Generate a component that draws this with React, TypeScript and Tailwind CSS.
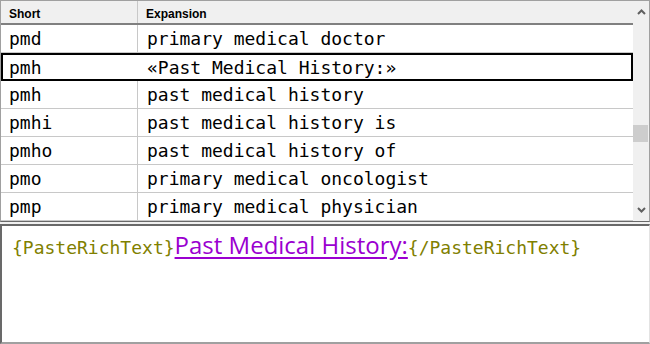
const rows: [string, string][] = [
  ['pmd', 'primary medical doctor'],
  ['pmh', '«Past Medical History:»'],
  ['pmh', 'past medical history'],
  ['pmhi', 'past medical history is'],
  ['pmho', 'past medical history of'],
  ['pmo', 'primary medical oncologist'],
  ['pmp', 'primary medical physician'],
];

const mono = { fontFamily: '"DejaVu Sans Mono", "Liberation Mono", monospace' };

function Chevron({ up }: { up?: boolean }) {
  return (
    <svg width="9" height="6" viewBox="0 0 9 6" className="block">
      <path
        d={up ? 'M1 5 L4.5 1.5 L8 5' : 'M1 1 L4.5 4.5 L8 1'}
        fill="none"
        stroke="#606060"
        strokeWidth="2"
      />
    </svg>
  );
}

export default function App() {
  return (
    <div className="w-[650px] h-[344px] bg-[#f0f0f0] flex flex-col overflow-hidden">
      <div className="h-[222px] flex bg-white border border-[#a0a0a0] border-b-[#696969]">
        <div className="flex-1 flex flex-col">
          <div
            className="h-[24px] flex bg-[#f0f0f0] border-b-2 border-[#808080] text-[12px] font-bold text-black"
            style={{ fontFamily: '"Liberation Sans", Arial, sans-serif' }}
          >
            <div className="w-[137px] pl-[8px] pt-[4px] border-r border-[#c8c8c8]">Short</div>
            <div className="flex-1 pl-[8px] pt-[4px]">Expansion</div>
          </div>
          {rows.map(([s, e], i) => {
            const sel = i === 1;
            return (
              <div
                key={i}
                className={
                  sel
                    ? 'h-[28px] flex items-center border-2 border-black text-[18px] font-medium text-black'
                    : 'h-[28px] flex items-center border-b border-[#c8c8c8] text-[18px] font-medium text-black'
                }
                style={mono}
              >
                <div
                  className={
                    sel
                      ? 'w-[135px] h-full flex items-center pl-[6px]'
                      : 'w-[137px] h-full flex items-center pl-[8px] border-r border-[#c8c8c8]'
                  }
                >
                  {s}
                </div>
                <div className="flex-1 pl-[9px] whitespace-pre">{e}</div>
              </div>
            );
          })}
        </div>
        <div className="w-[16px] bg-[#f0f0f0] flex flex-col items-center justify-between py-[8px] relative">
          <Chevron up />
          <div className="absolute left-0 right-[1px] top-[124px] h-[17px] bg-[#cdcdcd]" />
          <Chevron />
        </div>
      </div>
      <div className="mt-[2px] flex-1 bg-white border-t-2 border-l-2 border-[#696969] border-r border-r-[#e3e3e3] border-b-2 border-b-[#a0a0a0] px-[10px] pt-[1px]">
        <div className="flex items-baseline whitespace-pre">
          <span className="text-[18px] text-[#808000]" style={mono}>
            {'{PasteRichText}'}
          </span>
          <span
            className="text-[24px] text-[#9a00d0] underline underline-offset-[3px]"
            style={{ fontFamily: '"Open Sans", "Noto Sans", sans-serif' }}
          >
            Past Medical History:
          </span>
          <span className="text-[18px] text-[#808000]" style={mono}>
            {'{/PasteRichText}'}
          </span>
        </div>
      </div>
    </div>
  );
}
